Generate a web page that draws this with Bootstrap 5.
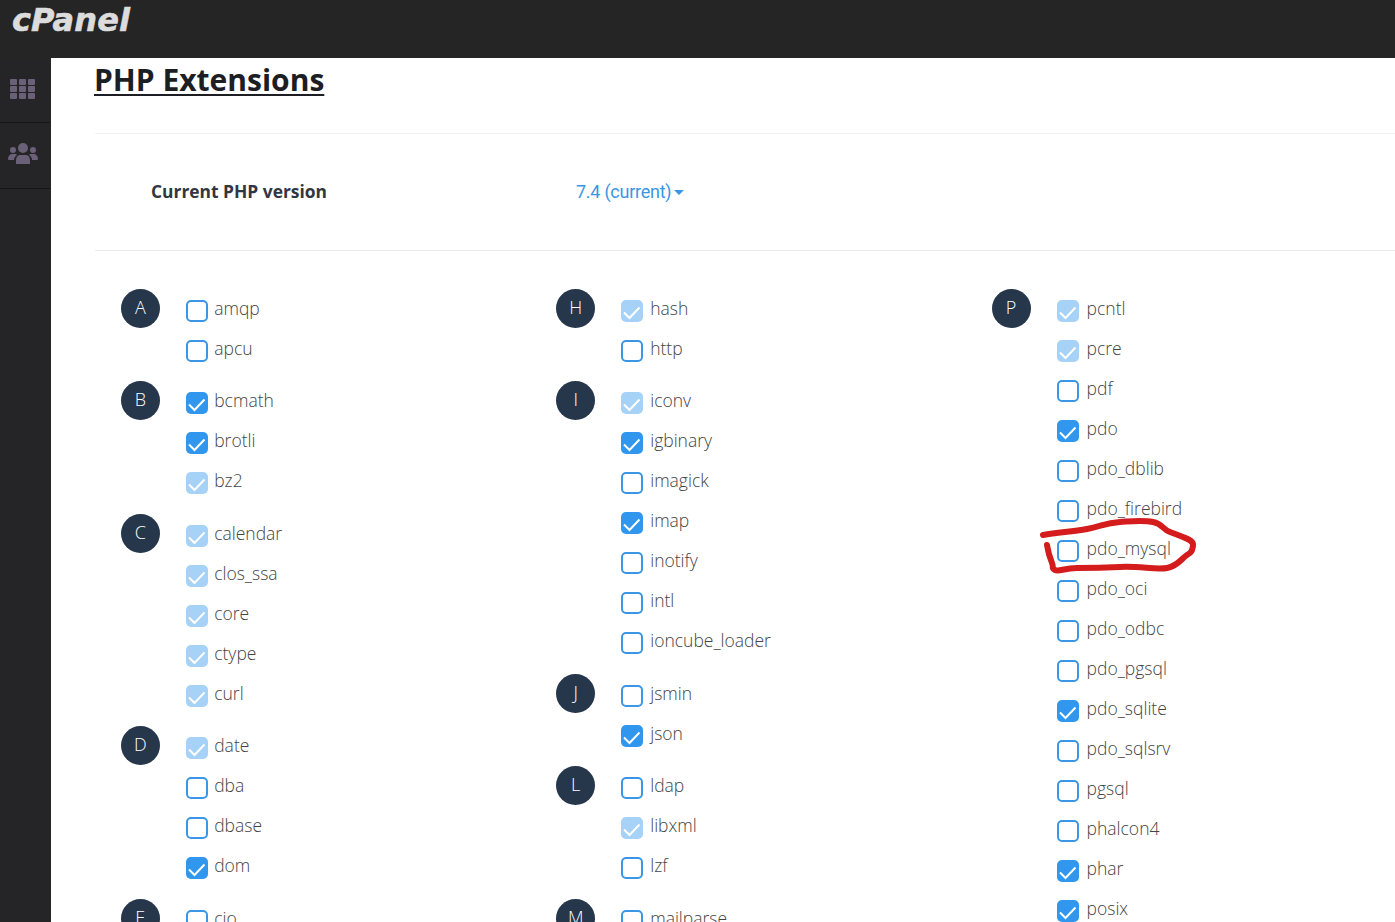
<!doctype html>
<html lang="en"><head><meta charset="utf-8"><title>PHP Extensions</title>
<link href="https://cdn.jsdelivr.net/npm/bootstrap@5.3.0/dist/css/bootstrap.min.css" rel="stylesheet">
<style>
html,body{height:100%;overflow:hidden;background:#fff}
body{font-family:"Open Sans",sans-serif;color:#444}
.topbar{height:58px;background:#252525;padding:0 12px;align-items:flex-start}
.logo{font:italic 700 32px/41px "DejaVu Sans",sans-serif;color:#dcdcdc;letter-spacing:.1px;-webkit-text-stroke:.6px #dcdcdc}
.side{width:51px;flex:none;background:#252527;height:864px}
.side-item{height:65px;border-bottom:1px solid #161616;margin-right:1px;padding:0 5px 3px 0}
.side-item+.side-item{height:66px;padding:0 4px 4px 0}
.main{padding-left:44px;width:1344px;flex:none}
h1.title{font:700 30px/44px "Open Sans",sans-serif;color:#1c1e24;text-decoration:underline;text-decoration-thickness:2px;text-underline-offset:3px;margin:0 0 0 -1px;height:75px}
.ver{height:118px;border-top:1px solid #f1f1f1;border-bottom:1px solid #ececec;padding-left:56px;width:1344px}
.ver b{font:700 17.4px/1 "Open Sans",sans-serif;color:#333640;width:425px}
.ver a{font:400 18px/1 Roboto,sans-serif;color:#3a96e4;text-decoration:none;letter-spacing:-.25px}
.caret-d{display:inline-block;border:5px solid transparent;border-top-color:#3a96e4;border-bottom:0;margin-left:3px;vertical-align:3px}
.ext-grid{display:grid;grid-template-columns:repeat(3,435.4px);padding:38px 0 0 25.8px}
.grp{display:flex;margin-bottom:12.4px}
.av{width:39px;height:39px;border-radius:50%;background:#26364b;color:#fff;flex:none;margin-right:26px;font:300 18px/37px "Open Sans",sans-serif;text-align:center}
.ext{height:40px;display:flex;align-items:flex-start;font:300 17.5px/38px "Open Sans",sans-serif;color:#444;margin:0}
.ext input{appearance:none;width:22px;height:22px;border:2px solid #3b97e6;border-radius:5px;margin:11px 7px 0 0;background:#fff;flex:none;display:block}
.ext-grid>div:first-child .ext input{margin-right:6.400px}
.ext-grid>div:last-child .ext input{margin-right:8px}
.ext input:checked{background:#3197ee url("data:image/svg+xml,%3Csvg xmlns='http://www.w3.org/2000/svg' viewBox='0 0 22 22'%3E%3Cpath d='M3 12.500l5.500 5.500 10-10.500' fill='none' stroke='%23fff' stroke-width='2'/%3E%3C/svg%3E") center/22px no-repeat;border:0}
.ext input.lock{background-color:#a6d2f7}
.ink{position:absolute;left:0;top:0;pointer-events:none}
</style></head><body>
<div class="d-flex topbar"><span class="logo">cPanel</span></div>
<div class="d-flex">
<nav class="side">
<div class="side-item d-flex align-items-center justify-content-center"><svg width="25" height="20" viewBox="0 0 25 20" fill="#6a6077"><rect width="7" height="6" rx="1"/><rect x="9" width="7" height="6" rx="1"/><rect x="18" width="7" height="6" rx="1"/><rect y="7" width="7" height="6" rx="1"/><rect x="9" y="7" width="7" height="6" rx="1"/><rect x="18" y="7" width="7" height="6" rx="1"/><rect y="14" width="7" height="6" rx="1"/><rect x="9" y="14" width="7" height="6" rx="1"/><rect x="18" y="14" width="7" height="6" rx="1"/></svg></div>
<div class="side-item d-flex align-items-center justify-content-center"><svg width="30" height="21" viewBox="0 0 30 21" fill="#6a6077"><circle cx="15" cy="5" r="5"/><circle cx="5" cy="7" r="3"/><circle cx="25" cy="7" r="3"/><path d="M8 21v-4c0-3 2-5 4-5h6c2 0 4 2 4 5v4z"/><path d="M0 16c0-3 2-5 4-5h3c1 0 2 .5 2 1-2 1-3 3-3 5H1c-.5 0-1-.5-1-1zM30 16c0-3-2-5-4-5h-3c-1 0-2 .5-2 1 2 1 3 3 3 5h5c.5 0 1-.5 1-1z"/></svg></div>
</nav>
<main class="main">
<h1 class="title">PHP Extensions</h1>
<div class="ver d-flex align-items-center"><b>Current PHP version</b><a href="#">7.4 (current)<span class="caret-d"></span></a></div>
<div class="ext-grid">
<div>
<div class="grp"><div class="av">A</div><div><label class="ext"><input type="checkbox">amqp</label><label class="ext"><input type="checkbox">apcu</label></div></div>
<div class="grp"><div class="av">B</div><div><label class="ext"><input type="checkbox" checked>bcmath</label><label class="ext"><input type="checkbox" checked>brotli</label><label class="ext"><input type="checkbox" class="lock" checked>bz2</label></div></div>
<div class="grp"><div class="av">C</div><div><label class="ext"><input type="checkbox" class="lock" checked>calendar</label><label class="ext"><input type="checkbox" class="lock" checked>clos_ssa</label><label class="ext"><input type="checkbox" class="lock" checked>core</label><label class="ext"><input type="checkbox" class="lock" checked>ctype</label><label class="ext"><input type="checkbox" class="lock" checked>curl</label></div></div>
<div class="grp"><div class="av">D</div><div><label class="ext"><input type="checkbox" class="lock" checked>date</label><label class="ext"><input type="checkbox">dba</label><label class="ext"><input type="checkbox">dbase</label><label class="ext"><input type="checkbox" checked>dom</label></div></div>
<div class="grp"><div class="av">E</div><div><label class="ext"><input type="checkbox">cio</label></div></div>
</div>
<div>
<div class="grp"><div class="av">H</div><div><label class="ext"><input type="checkbox" class="lock" checked>hash</label><label class="ext"><input type="checkbox">http</label></div></div>
<div class="grp"><div class="av">I</div><div><label class="ext"><input type="checkbox" class="lock" checked>iconv</label><label class="ext"><input type="checkbox" checked>igbinary</label><label class="ext"><input type="checkbox">imagick</label><label class="ext"><input type="checkbox" checked>imap</label><label class="ext"><input type="checkbox">inotify</label><label class="ext"><input type="checkbox">intl</label><label class="ext"><input type="checkbox">ioncube_loader</label></div></div>
<div class="grp"><div class="av">J</div><div><label class="ext"><input type="checkbox">jsmin</label><label class="ext"><input type="checkbox" checked>json</label></div></div>
<div class="grp"><div class="av">L</div><div><label class="ext"><input type="checkbox">ldap</label><label class="ext"><input type="checkbox" class="lock" checked>libxml</label><label class="ext"><input type="checkbox">lzf</label></div></div>
<div class="grp"><div class="av">M</div><div><label class="ext"><input type="checkbox">mailparse</label></div></div>
</div>
<div>
<div class="grp"><div class="av">P</div><div><label class="ext"><input type="checkbox" class="lock" checked>pcntl</label><label class="ext"><input type="checkbox" class="lock" checked>pcre</label><label class="ext"><input type="checkbox">pdf</label><label class="ext"><input type="checkbox" checked>pdo</label><label class="ext"><input type="checkbox">pdo_dblib</label><label class="ext"><input type="checkbox">pdo_firebird</label><label class="ext"><input type="checkbox">pdo_mysql</label><label class="ext"><input type="checkbox">pdo_oci</label><label class="ext"><input type="checkbox">pdo_odbc</label><label class="ext"><input type="checkbox">pdo_pgsql</label><label class="ext"><input type="checkbox" checked>pdo_sqlite</label><label class="ext"><input type="checkbox">pdo_sqlsrv</label><label class="ext"><input type="checkbox">pgsql</label><label class="ext"><input type="checkbox">phalcon4</label><label class="ext"><input type="checkbox" checked>phar</label><label class="ext"><input type="checkbox" checked>posix</label></div></div>
</div>
</div>
</main>
</div>
<svg class="ink" width="1395" height="922" viewBox="0 0 1395 922" aria-hidden="true"><path d="M1043 535C1060 532 1072 532 1087 529S1105 523 1120 522 1143 520 1153 522 1162 529 1170 532 1178 535 1183 537 1194 541 1193 546 1192 552 1187 555 1178 566 1167 568 1140 566 1120 567 1090 568 1077 568 1059 572 1055 570 1054 568 1052 563 1048 552 1047 545" fill="none" stroke="#d41c1c" stroke-width="6" stroke-linecap="round" stroke-linejoin="round"/></svg>
<script src="https://cdn.jsdelivr.net/npm/bootstrap@5.3.0/dist/js/bootstrap.bundle.min.js"></script>
</body></html>
